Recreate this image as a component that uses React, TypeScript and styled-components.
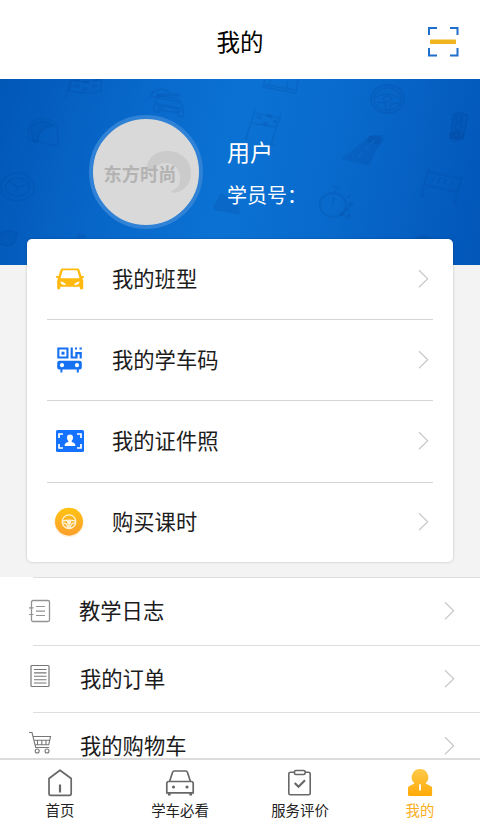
import React from 'react';
import styled, { createGlobalStyle } from 'styled-components';

const GlobalStyle = createGlobalStyle`
  * { box-sizing: border-box; }
  body {
    margin: 0;
    font-family: "Noto Sans CJK SC", sans-serif;
    color: #1c1c1c;
    background: #fff;
  }
  svg { display: block; }
`;

const Screen = styled.div`
  width: 480px;
  height: 826px;
  display: flex;
  flex-direction: column;
  overflow: hidden;
  background: #fff;
`;

const Header = styled.header`
  flex: none;
  height: 79px;
  display: grid;
  grid-template-columns: 1fr auto 1fr;
  align-items: center;
  padding: 3px 21px 0;
`;

const Title = styled.h1`
  grid-column: 2;
  margin: 0;
  font-size: 23.5px;
  line-height: 36px;
  font-weight: 400;
  color: #000;
`;

const ScanButton = styled.button`
  justify-self: end;
  padding: 0;
  border: 0;
  background: none;
`;

const Content = styled.main`
  flex: 1;
  min-height: 0;
  overflow: hidden;
  background: #f3f3f3;
`;

const Hero = styled.section`
  position: relative;
  height: 186px;
  display: flex;
  align-items: flex-start;
  gap: 24px;
  padding: 36px 0 0 89px;
  background: linear-gradient(102deg, #0257b7 0%, #0869cb 28%, #0b72d3 48%, #0869cb 70%, #0256b8 100%);
`;

const HeroPattern = styled.svg`
  position: absolute;
  inset: 0;
`;

const Avatar = styled.div`
  position: relative;
  flex: none;
  width: 114px;
  height: 114px;
  display: flex;
  align-items: center;
  justify-content: center;
  border-radius: 50%;
  border: 4px solid #2f82d5;
  background: #d9d9d9;
`;

const Swirl = styled.svg`
  position: absolute;
  left: 52px;
  top: 29px;
`;

const LogoText = styled.span`
  position: relative;
  margin: 2px 12px 0 0;
  font-size: 18.2px;
  line-height: 20px;
  font-weight: 700;
  color: #b3b3b3;
  white-space: nowrap;
`;

const Profile = styled.div`
  position: relative;
  padding-top: 18px;
  color: #fff;
`;

const UserName = styled.div`
  font-size: 23px;
  line-height: 36px;
`;

const StudentId = styled.div`
  margin-top: 11px;
  font-size: 20px;
  line-height: 30px;
`;

const Card = styled.section`
  position: relative;
  margin: -26px 27px 15px;
  height: 323px;
  padding: 0 20px;
  border-radius: 5px;
  background: #fff;
  box-shadow: 0 0 2px 1px rgba(0, 0, 0, 0.1);
`;

const CardRow = styled.div`
  height: 81.2px;
  display: grid;
  grid-template-columns: 65px 1fr 15px;
  align-items: center;
  border-bottom: 1px solid #d5d5d5;
  &:last-child { border-bottom: 0; height: 79px; }
`;

const IconSlot = styled.span<{ $left: number }>`
  padding-left: ${(p) => p.$left}px;
`;

const Label = styled.span`
  padding-bottom: 2px;
  font-size: 21.3px;
  line-height: 22px;
`;

const List = styled.section`
  background: #fff;
`;

const ListRow = styled.div<{ $inset?: number }>`
  height: 67.5px;
  display: grid;
  grid-template-columns: ${(p) => 46 + (p.$inset ?? 1)}px 1fr 36px;
  align-items: center;
  margin-left: 33px;
  border-top: 1px solid #dedede;
`;

const ListIcon = styled.span<{ $shift: number }>`
  margin: ${(p) => p.$shift}px 0 0 -5px;
`;

const TabBar = styled.nav`
  flex: none;
  height: 68px;
  display: grid;
  grid-template-columns: repeat(4, 1fr);
  border-top: 2px solid #dcdcdc;
  background: #fff;
`;

const Tab = styled.div<{ $active?: boolean }>`
  display: flex;
  flex-direction: column;
  align-items: center;
  padding-top: 8px;
  font-size: 14.4px;
  line-height: 22px;
  color: ${(p) => (p.$active ? '#fbae1c' : '#222')};
`;

const TabLabel = styled.span`
  margin-top: 1px;
`;

const Chevron = () => (
  <svg width="12" height="20" viewBox="0 0 12 20" fill="none" stroke="#c9c9c9" strokeWidth="1.2">
    <path d="M1 1.200 9.700 9.700 1 18.200" />
  </svg>
);

const ScanIcon = () => (
  <svg width="32" height="32" viewBox="0 0 32 32" fill="none">
    <path d="M2 10V3H10M23 3H30.5V10M30.5 23V30.5H23M10 30.5H2V23" stroke="#216fcc" strokeWidth="2" />
    <rect x="3" y="14.6" width="26" height="4.4" rx=".8" fill="#f0b51e" />
  </svg>
);

const CarIcon = () => (
  <svg width="28" height="22" viewBox="0 0 28 22">
    <path
      fill="#ffb90f"
      fillRule="evenodd"
      d="M6.500.500h15q1.500 0 2 1.400L25.500 8H27q1 0 1 1t-1 1.100h-.8l1 2.300V20q0 1.400-1.400 1.400h-.6q-1.400 0-1.400-1.400v-1.200H4.200V20q0 1.400-1.400 1.400h-.2Q1.200 21.400 1.200 20v-7.600l.8-2.300H1Q0 10 0 9t1-1h1.500L4.500 1.900Q5 .500 6.500.500ZM6.800 2.300 4.500 10.200H23.500L21.200 2.300ZM4.500 13.500Q4.500 17.200 10 17 9.100 14.300 4.500 13.500ZM23.500 13.500Q18.900 14.300 18 17 23.500 17.200 23.500 13.500Z"
    />
  </svg>
);

const CodeIcon = () => (
  <svg width="25" height="26" viewBox="0 0 25 26">
    <g fill="#1571f1">
      <path fillRule="evenodd" d="M.3.500h11.200v11H.300ZM2.400 2.600v6.900h7V2.600Z" />
      <rect x="4.500" y="4.700" width="3" height="3" />
      <path d="M13.600.500h2.200v9h2.500V5h6.500v6.500h-2.200V7.200h-2V11.500h-7ZM18 .500h2v2h-2ZM22.500.500h2.300v2h-2.300Z" />
      <path
        fillRule="evenodd"
        d="M2.500 13.800h20q2.300 0 2.300 2.300v4.300q0 2-2 2h-1V25.500h-2v-3.100H5.400V25.500h-2v-3.100H2.200q-2 0-2-2v-4.300q0-2.300 2.300-2.300ZM5 16.100a2.100 2.100 0 1 0 .01 0ZM20 16.100a2.100 2.100 0 1 0 .01 0Z"
      />
    </g>
  </svg>
);

const IdPhotoIcon = () => (
  <svg width="28" height="22" viewBox="0 0 28 22">
    <rect width="28" height="22" rx="1.500" fill="#1571ff" />
    <path d="M7 4H3v4M21 4h4v4M7 18H3v-4M21 18h4v-4" fill="none" stroke="#fff" strokeWidth="1.700" />
    <path fill="#fff" d="M14 4.500c2 0 3 1.200 3 3.100 0 1.500-.5 2.600-1.300 3.200v1.300c2.300.6 3.700 1.300 3.700 3.900H8.600c0-2.600 1.400-3.300 3.700-3.900v-1.300C11.500 10.200 11 9.100 11 7.600c0-1.900 1-3.100 3-3.100Z" />
  </svg>
);

const LessonIcon = () => (
  <svg width="34" height="34" viewBox="0 0 34 34">
    <defs>
      <linearGradient id="lesson" x1="0" y1="0" x2="0" y2="1">
        <stop stopColor="#ffc313" />
        <stop offset="1" stopColor="#fc9e2c" />
      </linearGradient>
    </defs>
    <circle cx="17" cy="17.500" r="14.800" fill="#fff2dc" />
    <circle cx="17" cy="16.700" r="14" fill="url(#lesson)" />
    <g fill="none" stroke="#fff3d4" strokeWidth="1.300">
      <circle cx="17" cy="16.700" r="6.800" />
      <path d="M10.500 16Q17 14.500 23.500 16M11 18.200q4.500-.3 4.800 5M23 18.200q-4.500-.3-4.800 5" />
    </g>
    <rect x="15" y="15.200" width="4" height="3.800" rx="1" fill="#fff3d4" />
    <path d="M17 18v5" stroke="#fff3d4" strokeWidth="1.600" />
  </svg>
);

const JournalIcon = () => (
  <svg width="23" height="24" viewBox="0 0 23 24" fill="none" stroke="#929292">
    <rect x="3.500" y="1.500" width="18" height="21" rx="1.500" strokeWidth="1.300" />
    <path d="M8 7.500h9M8 12.100h9M8 16.500h9M1 8.900h4.500M1 15.500h4.500" strokeWidth="1.200" />
  </svg>
);

const OrderIcon = () => (
  <svg width="23" height="24" viewBox="0 0 23 24" fill="none" stroke="#777">
    <rect x="3" y="1.500" width="18" height="21" rx="1" strokeWidth="1.200" />
    <path d="M6 5.500h12.500M6 8.900h12.500M6 12.300h12.500M6 15.700h12.500M6 19h12.500" strokeWidth="1.100" />
  </svg>
);

const CartIcon = () => (
  <svg width="24" height="24" viewBox="0 0 24 24" fill="none" stroke="#777" strokeWidth="1.100">
    <path d="M1 1.500h3l3.700 15h13.500M4.800 5.500h17.700l-1.800 8.300H7M6 9.300h15.500M9.500 9v4.500M13.800 9v4.500M18 9v4.500" />
    <circle cx="9.200" cy="20" r="2" />
    <circle cx="19" cy="20" r="2" />
  </svg>
);

const HomeIcon = () => (
  <svg width="28" height="30" viewBox="0 0 28 30" fill="none" stroke="#686868" strokeWidth="1.700" strokeLinejoin="round">
    <path d="M3 10.500 14 2.200 25.200 10.500V25.500q0 1.800-1.800 1.800H4.800Q3 27.300 3 25.500Z" />
    <path d="M14 16.500v8" strokeWidth="2.200" />
  </svg>
);

const LearnIcon = () => (
  <svg width="30" height="30" viewBox="0 0 30 30" fill="none" stroke="#686868" strokeWidth="1.700">
    <path d="M4.500 13.500 7.700 4Q8 3 9 3h12q1 0 1.300 1l3.200 9.500M3.800 13.500h22.400q2 0 2 2v9.300H1.800V15.500q0-2 2-2Z" />
    <path d="M4.300 25v2.500M25.700 25v2.500" strokeWidth="2.800" />
    <g fill="#686868" stroke="none">
      <circle cx="8.500" cy="19" r="1.600" />
      <circle cx="22" cy="19" r="1.600" />
    </g>
  </svg>
);

const ReviewIcon = () => (
  <svg width="28" height="30" viewBox="0 0 28 30" fill="none" stroke="#686868" strokeWidth="1.600">
    <path d="M8.500 4.300H4.500q-1.700 0-1.700 1.700v19q0 1.700 1.700 1.700h18q1.700 0 1.700-1.700V6q0-1.700-1.700-1.700h-3.500" />
    <rect x="8.500" y="2.500" width="10.600" height="4" rx="1.200" />
    <path d="M8.700 15 12.500 18.700l6.500-6.500" strokeWidth="2.200" />
  </svg>
);

const MineIcon = () => (
  <svg width="28" height="30" viewBox="0 0 28 30">
    <defs>
      <linearGradient id="mine" x1="0" y1="0" x2="0" y2="1">
        <stop stopColor="#ffc94a" />
        <stop offset="1" stopColor="#ffaa08" />
      </linearGradient>
    </defs>
    <path
      fill="url(#mine)"
      d="M14 1a8.300 8.300 0 0 1 5.600 14.400l5.500 2.800q1 .6 1 1.800v6.500q0 1.500-1.500 1.500H3.600Q2 28 2 26.500V20q0-1.200 1-1.800l5.400-2.800A8.300 8.300 0 0 1 14 1Z"
    />
    <path d="M14 16.300v6.200" stroke="#fff" strokeWidth="1.800" />
  </svg>
);

const DrivingPattern = () => (
  <HeroPattern width="480" height="186" viewBox="0 0 480 186" fill="none" stroke="#043f92" strokeOpacity=".17" strokeWidth="1.600">
    <g>
      <path d="M71 0 65 19M72 1q15 4 29-1v12q-15 4-32 0Z" />
      <path d="M74 7h6M83 3h6M82 10h6M92 7h6M75 1h5M94 1h5" strokeWidth="3" />
    </g>
    <g>
      <path d="M150 19q1-8 12-9l8 3M151 17l8 2M154 26l4-9 20 3 5 8v10l-5-1v-3l-19-3v2l-5-1ZM158 19l21 4M157 28l6 1M175 32l6 1" />
      <path d="M156 16h24M156 25l25 5" strokeWidth="3" />
    </g>
    <g>
      <path d="M29 61Q24 44 39 40q17-3 19 14v13l-29-6" />
      <path fill="#043f92" fillOpacity=".12" d="M32 57q-5-12 7-14 8-2 14 4-15 1-15 15l-4 1Z" />
    </g>
    <g>
      <ellipse cx="17.500" cy="108" rx="16.500" ry="14" />
      <ellipse cx="17.500" cy="108" rx="12" ry="9" />
      <path d="m9 102 8 6 11-2M15 114l3-6" />
      <path d="M0 154q10-5 17 0-1 13-11 13l-6-2" fill="#043f92" fillOpacity=".1" />
    </g>
    <g>
      <path d="m255 30-9 30m35-26-10 32M255 34l25 5-4 9-25-4M245 60h4M271 66h4" />
      <path d="m257 38 5 1M267 36l5 2M263 44l5 1M273 42l4 1" strokeWidth="3" />
      <path d="M265 0l-2 8 33 6 2-14M271 1l-3 8M288 3l-2 9M265 6l31 5" />
    </g>
    <g>
      <ellipse cx="387.500" cy="20" rx="16.500" ry="14" strokeWidth="2.200" />
      <ellipse cx="387.500" cy="20" rx="13.500" ry="11" />
      <path d="M374 19q13-8 27 1M376 23l9 1 1 7M399 24l-8 1-2 6" />
      <ellipse cx="387.500" cy="20" rx="4" ry="3" />
    </g>
    <g>
      <path d="m453 36 5-3 10 3-5 24-13-1Z" fill="#043f92" fillOpacity=".12" />
      <circle cx="459" cy="40" r="3" />
      <circle cx="458" cy="48" r="3" />
      <circle cx="456" cy="56" r="3" />
    </g>
    <g fill="#043f92" fillOpacity=".16" stroke="none">
      <path d="m341 80 29-23 14-1-15 31Z" />
      <path d="m213 128 8-14 17 10 2 12-26-5ZM99 122q2-14 10-10l-4 15ZM367 63l2-6 8-1 7 5-4 5ZM413 162q10-13 21-1M75 159l4-5 6 2 1 3ZM449 54q8-5 16 0-2 9-8 9-8 0-8-5Z" />
    </g>
    <path d="m358 78 4-4M365 71l4-4M371 65l4-4" stroke="#126fcf" strokeOpacity=".6" strokeWidth="1.300" />
    <g>
      <ellipse cx="333" cy="126" rx="13" ry="12" strokeWidth="2.200" />
      <path d="m335 113 1-5M332 107l8 2M334 118l-2 9M347 119l4-3" />
      <path d="m349 126 4-1M345 131l5-1M340 135l5 0M346 139l5-3" strokeWidth="4" />
    </g>
    <g>
      <path d="m429 89-8 28M462 97l-7 27M429 93l32 7-4 13-31-7M421 117h4M453 124h5" strokeWidth="2" />
      <path d="m432 102 3-4M438 104l2-5 3 1M444 105l2-5M450 107l2-5" />
    </g>
  </HeroPattern>
);

const cardItems = [
  { label: '我的班型', Icon: CarIcon, left: 8.5 },
  { label: '我的学车码', Icon: CodeIcon, left: 10 },
  { label: '我的证件照', Icon: IdPhotoIcon, left: 8.5 },
  { label: '购买课时', Icon: LessonIcon, left: 5 },
];

const listItems = [
  { label: '教学日志', Icon: JournalIcon, inset: 0, shift: 0 },
  { label: '我的订单', Icon: OrderIcon, inset: 1, shift: -6 },
  { label: '我的购物车', Icon: CartIcon, inset: 1, shift: -6 },
];

const tabs = [
  { label: '首页', Icon: HomeIcon },
  { label: '学车必看', Icon: LearnIcon },
  { label: '服务评价', Icon: ReviewIcon },
  { label: '我的', Icon: MineIcon, active: true },
];

export default function App() {
  return (
    <Screen>
      <GlobalStyle />
      <Header>
        <Title>我的</Title>
        <ScanButton aria-label="扫一扫"><ScanIcon /></ScanButton>
      </Header>
      <Content>
        <Hero>
          <DrivingPattern />
          <Avatar>
            <Swirl width="50" height="50" viewBox="0 0 50 50" fill="#cbcbcb">
              <path d="M1 20C4 8 12 3 22 3 36 3 46 12 46 25 46 36 39 44 28 45L26 43C33 41 36 35 35 28 34 20 28 15 21 15 15 15 11 18 9 23Z" />
            </Swirl>
            <LogoText>东方时尚</LogoText>
          </Avatar>
          <Profile>
            <UserName>用户</UserName>
            <StudentId>学员号：</StudentId>
          </Profile>
        </Hero>
        <Card>
          {cardItems.map(({ label, Icon, left }) => (
            <CardRow key={label}>
              <IconSlot $left={left}><Icon /></IconSlot>
              <Label>{label}</Label>
              <Chevron />
            </CardRow>
          ))}
        </Card>
        <List>
          {listItems.map(({ label, Icon, inset, shift }) => (
            <ListRow key={label} $inset={inset}>
              <ListIcon $shift={shift}><Icon /></ListIcon>
              <Label>{label}</Label>
              <Chevron />
            </ListRow>
          ))}
        </List>
      </Content>
      <TabBar>
        {tabs.map(({ label, Icon, active }) => (
          <Tab key={label} $active={active}>
            <Icon />
            <TabLabel>{label}</TabLabel>
          </Tab>
        ))}
      </TabBar>
    </Screen>
  );
}
